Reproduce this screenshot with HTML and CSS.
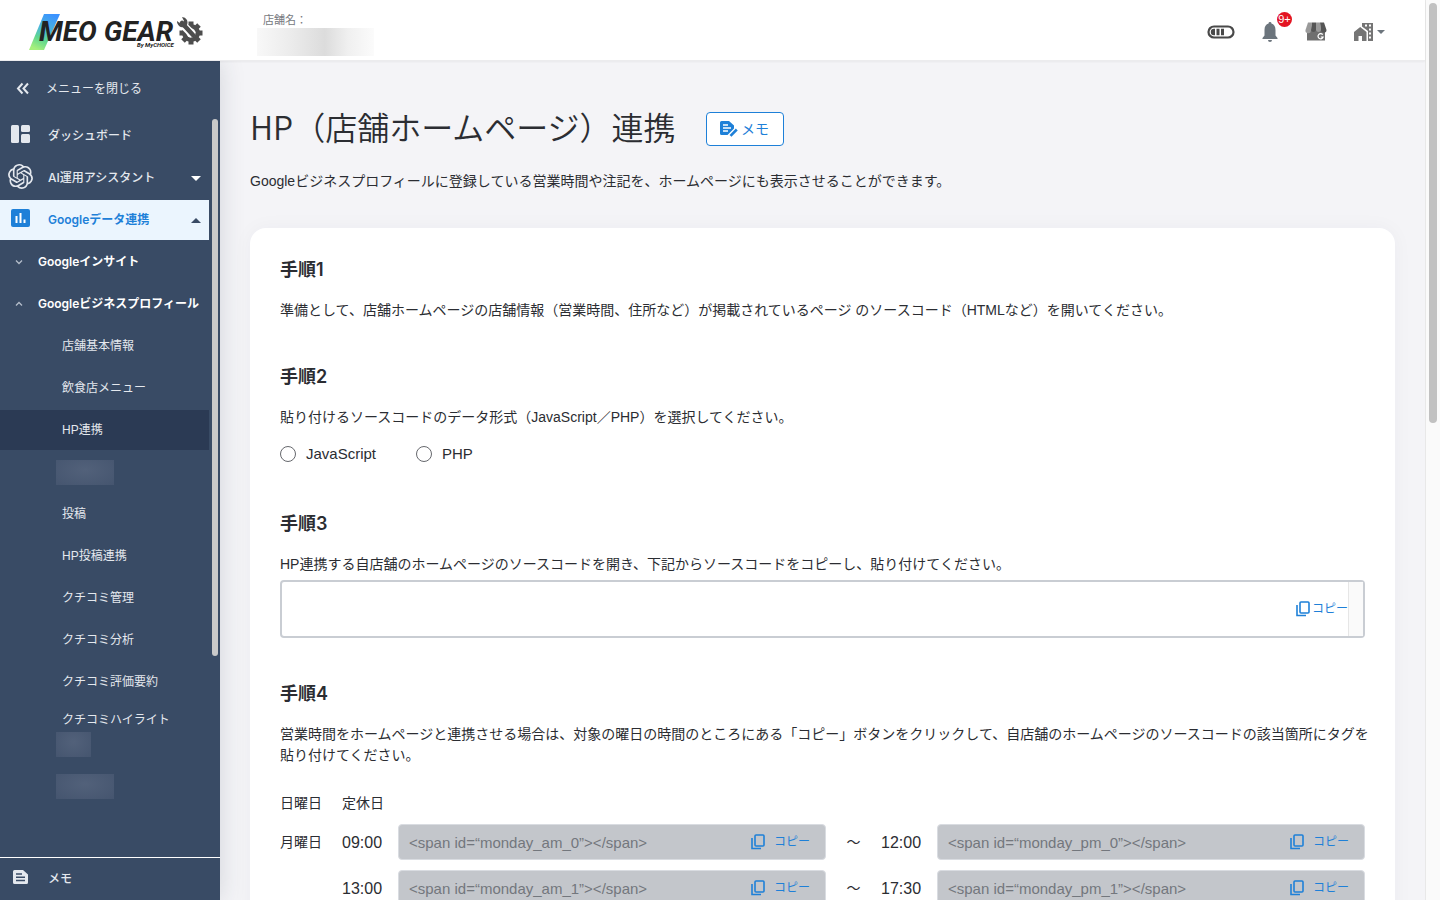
FILE: index.html
```html
<!DOCTYPE html>
<html lang="ja">
<head>
    <meta charset="UTF-8">
    <meta name="viewport" content="width=device-width, initial-scale=1.0">
    <title>HP連携 | MEO GEAR</title>
    <link rel="stylesheet" href="styles.css">
</head>
<body>
    <!-- shared icons -->
    <svg class="sprite" width="0" height="0" aria-hidden="true">
        <symbol id="icon-copy" viewBox="0 0 14 16">
            <rect x="4" y="1" width="9" height="11" rx="1" fill="none" stroke="currentColor" stroke-width="1.6"/>
            <path d="M1 4v10.500h9" fill="none" stroke="currentColor" stroke-width="1.6"/>
        </symbol>
    </svg>

    <div class="app">
        <header class="header">
            <a href="#" class="logo" aria-label="MEO GEAR">
                <svg width="176" height="40" viewBox="0 0 176 40">
                    <defs>
                        <linearGradient id="slash" x1="0.7" y1="0" x2="0.3" y2="1">
                            <stop offset="0" stop-color="#3b93ff"/>
                            <stop offset="0.45" stop-color="#4cb8d8"/>
                            <stop offset="0.7" stop-color="#5fd690"/>
                            <stop offset="1" stop-color="#a6f07c"/>
                        </linearGradient>
                    </defs>
                    <path d="M16 1h16L16 37H1z" fill="url(#slash)"/>
                    <text class="logo-name" x="11" y="28">MEO GEAR</text>
                    <text class="logo-by" x="109" y="34">By MyCHOICE</text>
                    <g fill="#4d4d4d">
                        <circle cx="163" cy="20" r="9"/>
                        <path d="M163 8.500v23M151.500 20h23M155 12l16 16M171 12l-16 16" stroke="#4d4d4d" stroke-width="5"/>
                        <circle cx="163" cy="20" r="4.500" fill="#fff"/>
                        <path d="M151 8l14 14" stroke="#fff" stroke-width="8"/>
                        <path d="M154 10l11 12" stroke="#4d4d4d" stroke-width="4.500" stroke-linecap="round"/>
                        <path d="M149 8a6 6 0 0 0 8 6 6 6 0 0 0 2-7 6 6 0 0 0-5-3l2 4-3 3z"/>
                    </g>
                </svg>
            </a>
            <div class="store">
                <span class="store-label">店舗名：</span>
                <span class="store-name"></span>
            </div>
            <nav class="header-tools">
                <button type="button" class="tool" aria-label="利用状況">
                    <svg width="28" height="16" viewBox="0 0 28 16">
                        <rect x="1.500" y="2.500" width="25" height="11" rx="5.500" fill="none" stroke="#494949" stroke-width="2.200"/>
                        <path d="M8 4.800v6.400H7a3.200 3.200 0 0 1 0-6.400zM9.500 4.800h3v6.400h-3zM14 4.800h3v6.400h-3z" fill="#494949"/>
                    </svg>
                </button>
                <button type="button" class="tool tool-bell" aria-label="お知らせ">
                    <svg width="16" height="20" viewBox="0 0 16 20">
                        <path d="M8 0a1.400 1.400 0 0 1 1.400 1.600C12 2.400 13.500 4.700 13.500 8v5.500L15.500 16v1H.5v-1l2-2.500V8c0-3.300 1.500-5.600 4.100-6.400A1.400 1.400 0 0 1 8 0zM6 18h4a2 2 0 0 1-4 0z" fill="#6c757d"/>
                    </svg>
                    <span class="badge">9+</span>
                </button>
                <button type="button" class="tool tool-shop" aria-label="Googleビジネスプロフィール">
                    <svg width="22" height="19" viewBox="0 0 22 19">
                        <path d="M2 8h18v10.500H2z" fill="#6f6f6f"/>
                        <path d="M3 .5h4L6 9a2.500 2.500 0 0 1-5.500-1z" fill="#9a9a9a"/>
                        <path d="M7 .5h4V8a2.600 2.600 0 0 1-5 0z" fill="#555"/>
                        <path d="M11 .5h4L16 8a2.600 2.600 0 0 1-5 0z" fill="#9a9a9a"/>
                        <path d="M15 .5h4L21.500 8A2.600 2.600 0 0 1 16 8z" fill="#555"/>
                        <path d="M17.700 12.700a2.600 2.600 0 1 0 .4 2.300h-2.300" fill="none" stroke="#fff" stroke-width="1.200"/>
                    </svg>
                </button>
                <button type="button" class="tool tool-office" aria-label="店舗切替">
                    <svg width="19" height="18" viewBox="0 0 19 18">
                        <path d="M0 9l6.200-5 6.300 5v9H8v-5H4.500v5H0z" fill="#757575"/>
                        <path d="M8 0h11v18h-5V8L8 3.500z" fill="#757575"/>
                        <path d="M11 2.500h2M15 2.500h2M15 6.500h2M15 10.500h2M15 14.500h2" stroke="#fff" stroke-width="2"/>
                    </svg>
                    <span class="caret"></span>
                </button>
            </nav>
        </header>

        <div class="body">
            <aside class="sidebar">
                <button type="button" class="menu-close">
                    <svg width="14" height="14" viewBox="0 0 14 14">
                        <path d="M6.500 1.500L2 6.500l4.500 5M12 1.500L7.500 6.500l4.500 5" fill="none" stroke="currentColor" stroke-width="2"/>
                    </svg>
                    メニューを閉じる
                </button>

                <nav class="menu">
                    <a href="#" class="menu-item">
                        <span class="menu-icon">
                            <svg width="19" height="18" viewBox="0 0 19 18" fill="currentColor">
                                <rect width="8" height="18" rx="1.500"/>
                                <rect x="10" width="9" height="7" rx="1.500"/>
                                <rect x="10" y="9" width="9" height="9" rx="1.500"/>
                            </svg>
                        </span>
                        ダッシュボード
                    </a>
                    <a href="#" class="menu-item">
                        <span class="menu-icon">
                            <svg width="25" height="25" viewBox="0 0 24 24" fill="currentColor">
                                <path d="M22.2819 9.8211a5.9847 5.9847 0 0 0-.5157-4.9108 6.0462 6.0462 0 0 0-6.5098-2.9A6.0651 6.0651 0 0 0 4.9807 4.1818a5.9847 5.9847 0 0 0-3.9977 2.9 6.0462 6.0462 0 0 0 .7427 7.0966 5.98 5.98 0 0 0 .511 4.9107 6.051 6.051 0 0 0 6.5146 2.9001A5.9847 5.9847 0 0 0 13.2599 24a6.0557 6.0557 0 0 0 5.7718-4.2058 5.9894 5.9894 0 0 0 3.9977-2.9001 6.0557 6.0557 0 0 0-.7475-7.0729zm-9.022 12.6081a4.4755 4.4755 0 0 1-2.8764-1.0408l.1419-.0804 4.7783-2.7582a.7948.7948 0 0 0 .3927-.6813v-6.7369l2.02 1.1686a.071.071 0 0 1 .038.0615v5.5826a4.504 4.504 0 0 1-4.4945 4.4944zm-9.6607-4.1254a4.4708 4.4708 0 0 1-.5346-3.0137l.142.0852 4.783 2.7582a.7712.7712 0 0 0 .7806 0l5.8428-3.3685v2.3324a.0804.0804 0 0 1-.0332.0615L9.74 19.9502a4.4992 4.4992 0 0 1-6.1408-1.6464zM2.3408 7.8956a4.485 4.485 0 0 1 2.3655-1.9728V11.6a.7664.7664 0 0 0 .3879.6765l5.8144 3.3543-2.0201 1.1685a.0757.0757 0 0 1-.071 0l-4.8303-2.7865A4.504 4.504 0 0 1 2.3408 7.872zm16.5963 3.8558L13.1038 8.364 15.1192 7.2a.0757.0757 0 0 1 .071 0l4.8303 2.7913a4.4944 4.4944 0 0 1-.6765 8.1042v-5.6772a.79.79 0 0 0-.407-.667zm2.0107-3.0231l-.142-.0852-4.7735-2.7818a.7759.7759 0 0 0-.7854 0L9.409 9.2297V6.8974a.0662.0662 0 0 1 .0284-.0615l4.8303-2.7866a4.4992 4.4992 0 0 1 6.6802 4.66zM8.3065 12.863l-2.02-1.1638a.0804.0804 0 0 1-.038-.0567V6.0742a4.4992 4.4992 0 0 1 7.3757-3.4537l-.142.0805L8.704 5.459a.7948.7948 0 0 0-.3927.6813zm1.0976-2.3654l2.602-1.4998 2.6069 1.4998v2.9994l-2.5974 1.4997-2.6067-1.4997Z"/>
                            </svg>
                        </span>
                        AI運用アシスタント
                        <span class="arrow"></span>
                    </a>
                    <a href="#" class="menu-item open">
                        <span class="menu-icon">
                            <svg width="19" height="18" viewBox="0 0 19 18">
                                <rect width="19" height="18" rx="2" fill="currentColor"/>
                                <path d="M5.500 7v7M9.500 4v10M13.500 10.500V14" stroke="#fff" stroke-width="2"/>
                            </svg>
                        </span>
                        Googleデータ連携
                        <span class="arrow arrow-up"></span>
                    </a>
                    <a href="#" class="menu-group">
                        <svg width="8" height="8" viewBox="0 0 8 8"><path d="M1 2.500l3 3 3-3" fill="none" stroke="currentColor" stroke-width="1.300"/></svg>
                        Googleインサイト
                    </a>
                    <a href="#" class="menu-group">
                        <svg width="8" height="8" viewBox="0 0 8 8"><path d="M1 5.500l3-3 3 3" fill="none" stroke="currentColor" stroke-width="1.300"/></svg>
                        Googleビジネスプロフィール
                    </a>
                    <a href="#" class="menu-sub">店舗基本情報</a>
                    <a href="#" class="menu-sub">飲食店メニュー</a>
                    <a href="#" class="menu-sub current">HP連携</a>
                    <div class="menu-masked"><span class="mask"></span></div>
                    <a href="#" class="menu-sub">投稿</a>
                    <a href="#" class="menu-sub">HP投稿連携</a>
                    <a href="#" class="menu-sub">クチコミ管理</a>
                    <a href="#" class="menu-sub">クチコミ分析</a>
                    <a href="#" class="menu-sub">クチコミ評価要約</a>
                    <a href="#" class="menu-sub two-line">クチコミハイライト<span class="mask mask-short"></span></a>
                    <div class="menu-masked"><span class="mask"></span></div>
                </nav>
                <span class="sidebar-thumb"></span>

                <a href="#" class="menu-item menu-memo">
                    <span class="menu-icon">
                        <svg width="15" height="14" viewBox="0 0 15 14">
                            <path d="M1.500 0H10l5 4.500v8a1.500 1.500 0 0 1-1.500 1.500h-12A1.500 1.500 0 0 1 0 12.500v-11A1.500 1.500 0 0 1 1.500 0z" fill="currentColor"/>
                            <path d="M3 4h6M3 7.200h9M3 10.400h9" stroke="#394b65" stroke-width="1.500"/>
                        </svg>
                    </span>
                    メモ
                </a>
            </aside>

            <main class="content">
                <div class="title-row">
                    <h1>HP（店舗ホームページ）連携</h1>
                    <button type="button" class="btn-memo">
                        <svg width="18" height="16" viewBox="0 0 18 16">
                            <path d="M1.500 0H9l5 4.500v3L7.500 14h-6A1.500 1.500 0 0 1 0 12.500v-11A1.500 1.500 0 0 1 1.500 0z" fill="currentColor"/>
                            <path d="M3 4h5M3 7h8M3 10h5" stroke="#fff" stroke-width="1.300"/>
                            <path d="M10.500 14.800L16.800 8.500" stroke="currentColor" stroke-width="2.600"/>
                        </svg>
                        メモ
                    </button>
                </div>
                <p class="lead">Googleビジネスプロフィールに登録している営業時間や注記を、ホームページにも表示させることができます。</p>

                <div class="card">
                    <section class="step">
                        <h2>手順1</h2>
                        <p>準備として、店舗ホームページの店舗情報（営業時間、住所など）が掲載されているページ のソースコード（HTMLなど）を開いてください。</p>
                    </section>

                    <section class="step">
                        <h2>手順2</h2>
                        <p>貼り付けるソースコードのデータ形式（JavaScript／PHP）を選択してください。</p>
                        <div class="radios">
                            <label><input type="radio" name="format" value="js">JavaScript</label>
                            <label><input type="radio" name="format" value="php">PHP</label>
                        </div>
                    </section>

                    <section class="step">
                        <h2>手順3</h2>
                        <p>HP連携する自店舗のホームページのソースコードを開き、下記からソースコードをコピーし、貼り付けてください。</p>
                        <div class="source-box">
                            <textarea aria-label="ソースコード" readonly></textarea>
                            <button type="button" class="btn-copy"><svg width="14" height="16"><use href="#icon-copy"/></svg>コピー</button>
                            <span class="source-track"></span>
                        </div>
                    </section>

                    <section class="step">
                        <h2>手順4</h2>
                        <p>営業時間をホームページと連携させる場合は、対象の曜日の時間のところにある「コピー」ボタンをクリックして、自店舗のホームページのソースコードの該当箇所にタグを貼り付けてください。</p>
                        <div class="hours">
                            <div class="hours-row closed">
                                <span class="day">日曜日</span>
                                <span>定休日</span>
                            </div>
                            <div class="hours-row">
                                <span class="day">月曜日</span>
                                <label class="time" for="mon-am-0">09:00</label>
                                <div class="tag">
                                    <input type="text" id="mon-am-0" value="&lt;span id=“monday_am_0”&gt;&lt;/span&gt;" readonly>
                                    <button type="button" class="btn-copy"><svg width="14" height="16"><use href="#icon-copy"/></svg>コピー</button>
                                </div>
                                <span class="tilde">〜</span>
                                <label class="time" for="mon-pm-0">12:00</label>
                                <div class="tag">
                                    <input type="text" id="mon-pm-0" value="&lt;span id=“monday_pm_0”&gt;&lt;/span&gt;" readonly>
                                    <button type="button" class="btn-copy"><svg width="14" height="16"><use href="#icon-copy"/></svg>コピー</button>
                                </div>
                            </div>
                            <div class="hours-row">
                                <span class="day"></span>
                                <label class="time" for="mon-am-1">13:00</label>
                                <div class="tag">
                                    <input type="text" id="mon-am-1" value="&lt;span id=“monday_am_1”&gt;&lt;/span&gt;" readonly>
                                    <button type="button" class="btn-copy"><svg width="14" height="16"><use href="#icon-copy"/></svg>コピー</button>
                                </div>
                                <span class="tilde">〜</span>
                                <label class="time" for="mon-pm-1">17:30</label>
                                <div class="tag">
                                    <input type="text" id="mon-pm-1" value="&lt;span id=“monday_pm_1”&gt;&lt;/span&gt;" readonly>
                                    <button type="button" class="btn-copy"><svg width="14" height="16"><use href="#icon-copy"/></svg>コピー</button>
                                </div>
                            </div>
                        </div>
                    </section>
                </div>
            </main>
        </div>
    </div>
    <div class="page-track"><span class="page-thumb"></span></div>
</body>
</html>
```
FILE: styles.css
```css
:root {
    --navy: #394b65;
    --navy-dark: #2b3a54;
    --blue: #1e80d8;
    --text: #2b2d32;
    --page-bg: #f4f4f7;
}

* {
    box-sizing: border-box;
}
body {
    display: flex;
    height: 100vh;
    margin: 0;
    overflow: hidden;
    font-family: "Liberation Sans", "Noto Sans CJK JP", sans-serif;
    font-size: 14px;
    line-height: 21px;
    color: var(--text);
    background: var(--page-bg);
}
h1, h2, p {
    margin: 0;
}
a {
    color: inherit;
    text-decoration: none;
}
button {
    padding: 0;
    border: none;
    background: none;
    font: inherit;
    color: inherit;
    cursor: pointer;
}
svg {
    display: block;
    flex-shrink: 0;
}
.sprite {
    position: absolute;
}
.app {
    flex: 1;
    min-width: 0;
    display: flex;
    flex-direction: column;
}

/* header */
.header {
    display: flex;
    flex-shrink: 0;
    height: 61px;
    padding: 0 40px 0 28px;
    background: #fff;
    border-bottom: 1px solid #ececee;
    box-shadow: 0 1px 2px rgba(0,0,0,0.05);
    position: relative;
    z-index: 2;
}
.logo {
    width: 229px;
    padding-top: 13px;
}
.logo-name {
    font: italic 700 28px Roboto, sans-serif;
    fill: #222;
}
.logo-by {
    font: italic 700 6px Roboto, sans-serif;
    fill: #222;
}
.store {
    padding-top: 12px;
}
.store-label {
    display: block;
    padding-left: 6px;
    font-size: 11px;
    line-height: 16px;
    color: #777a80;
}
.store-name {
    display: block;
    width: 117px;
    height: 28px;
    background: linear-gradient(90deg, #f8f8f8, #ebebeb 30%, #dcdcdc 58%, #f0f0f0 78%, #fbfbfb);
}
.header-tools {
    display: flex;
    align-items: center;
    gap: 27px;
    margin-left: auto;
    padding-top: 3px;
}
.tool {
    display: flex;
    align-items: center;
    position: relative;
}
.badge {
    position: absolute;
    top: -10px;
    left: 15px;
    width: 15px;
    height: 15px;
    border-radius: 50%;
    background: #e31422;
    color: #fff;
    font-size: 11px;
    line-height: 15px;
    text-align: center;
}
.caret {
    margin-left: 4px;
    border: 4px solid transparent;
    border-top-color: #6c757d;
    border-bottom: none;
}

/* sidebar */
.body {
    flex: 1;
    min-height: 0;
    display: flex;
}
.sidebar {
    display: flex;
    flex-direction: column;
    flex-shrink: 0;
    width: 220px;
    background: var(--navy);
    color: #e4e8ee;
    font-size: 12px;
    line-height: 18px;
    position: relative;
    z-index: 1;
    box-shadow: 0 0 24px rgba(40,50,70,0.16);
}
.menu-close {
    display: flex;
    align-items: center;
    flex-shrink: 0;
    gap: 16px;
    height: 55px;
    padding-left: 16px;
}
.menu {
    flex: 1;
    min-height: 0;
    display: flex;
    flex-direction: column;
    gap: 2px;
    width: 209px;
    overflow: hidden;
}
.menu-item,
.menu-group,
.menu-sub,
.menu-masked {
    display: flex;
    align-items: center;
    flex-shrink: 0;
    height: 40px;
}
.menu-item,
.menu-group {
    font-family: Inter, "Noto Sans CJK JP", sans-serif;
    font-weight: 500;
}
.menu-item {
    padding: 0 8px;
}
.menu-icon {
    display: flex;
    justify-content: center;
    width: 25px;
    margin-right: 15px;
    padding-bottom: 4px;
}
.menu-item.open {
    background: #ebf5fe;
    color: var(--blue);
    font-weight: 600;
}
.arrow {
    margin-left: auto;
    border: 5px solid transparent;
    border-top-color: #fff;
    border-bottom: none;
}
.arrow-up {
    border: 5px solid transparent;
    border-top: none;
    border-bottom-color: var(--navy);
}
.menu-group {
    gap: 15px;
    padding-left: 15px;
    color: #fff;
    font-weight: 600;
    white-space: nowrap;
}
.menu-group svg {
    color: #b4bdca;
}
.menu-sub {
    padding-left: 62px;
}
.menu-sub.current {
    background: var(--navy-dark);
}
.menu-sub.two-line {
    display: block;
    height: 60px;
    padding-top: 7px;
}
.menu-masked {
    padding-left: 56px;
}
.mask {
    display: block;
    width: 58px;
    height: 25px;
    background: radial-gradient(ellipse at 50% 40%, #52617a, #45556f);
}
.mask-short {
    width: 35px;
    margin: 3px 0 0 -6px;
}
.sidebar-thumb {
    position: absolute;
    top: 58px;
    right: 2px;
    width: 6px;
    height: 64%;
    border-radius: 3px;
    background: #c9c9c9;
}
.menu-memo {
    height: 43px;
    border-top: 1px solid #fff;
}

/* content */
.content {
    flex: 1;
    min-width: 0;
    padding: 47px 30px 0;
}
.title-row {
    display: flex;
    align-items: center;
    gap: 30px;
    height: 42px;
}
h1 {
    padding-bottom: 6px;
    font-family: "Noto Sans CJK JP", sans-serif;
    font-size: 32px;
    font-weight: 350;
    line-height: 42px;
}
.btn-memo {
    display: flex;
    align-items: center;
    justify-content: center;
    gap: 3px;
    width: 78px;
    height: 34px;
    border: 1px solid var(--blue);
    border-radius: 4px;
    background: #fff;
    color: var(--blue);
}
.lead {
    margin-top: 21px;
}
.card {
    margin-top: 36px;
    padding: 31px 30px;
    border-radius: 16px;
    background: #fff;
    box-shadow: 0 0 20px rgba(40,50,70,0.04);
}
.step + .step {
    margin-top: 45px;
}
.step p {
    margin-right: -5px;
}
h2 {
    margin-bottom: 19px;
    font-family: Inter, "Noto Sans CJK JP", sans-serif;
    font-size: 18px;
    font-weight: 600;
    line-height: 22px;
}
.radios {
    display: flex;
    gap: 40px;
    margin-top: 15px;
    padding-bottom: 4px;
    font-size: 15px;
}
.radios label {
    display: flex;
    align-items: center;
    gap: 10px;
}
.radios input {
    appearance: none;
    width: 16px;
    height: 16px;
    margin: 0;
    border: 1px solid #66686d;
    border-radius: 50%;
    background: #fff;
}
.radios input:checked {
    border: 5px solid var(--blue);
}
.btn-copy {
    display: flex;
    align-items: center;
    gap: 9px;
    color: var(--blue);
    font-size: 12px;
    white-space: nowrap;
}
.source-box {
    display: flex;
    height: 58px;
    margin-top: 5px;
    border: 2px solid #c9cdd3;
    border-radius: 4px;
}
.source-box textarea {
    flex: 1;
    min-width: 0;
    padding: 8px;
    border: none;
    outline: none;
    resize: none;
    background: none;
    font: inherit;
}
.source-box .btn-copy {
    gap: 2px;
}
.source-track {
    width: 15px;
    border-left: 1px solid #e6e6e6;
    background: #fafafa;
}

/* opening hours */
.hours {
    display: flex;
    flex-direction: column;
    gap: 10px;
    margin-top: 27px;
}
.hours-row {
    display: flex;
    align-items: center;
}
.day {
    width: 62px;
}
.time {
    width: 56px;
    font-size: 16px;
}
.tag {
    flex: 1;
    min-width: 0;
    display: flex;
    height: 36px;
    padding: 0 15px 0 10px;
    border: 1px solid #d9dce1;
    border-radius: 4px;
    background: #c3c6cb;
}
.tag input {
    flex: 1;
    min-width: 0;
    padding: 0;
    border: none;
    outline: none;
    background: none;
    font: inherit;
    font-size: 15px;
    color: #73777d;
}
.tilde {
    width: 55px;
    text-align: center;
}

/* page scrollbar */
.page-track {
    flex-shrink: 0;
    width: 15px;
    padding: 3px;
    border-left: 1px solid #e8e8e8;
    background: #fafafa;
}
.page-thumb {
    display: block;
    width: 8px;
    height: 47%;
    border-radius: 4px;
    background: #c1c1c1;
}
```
